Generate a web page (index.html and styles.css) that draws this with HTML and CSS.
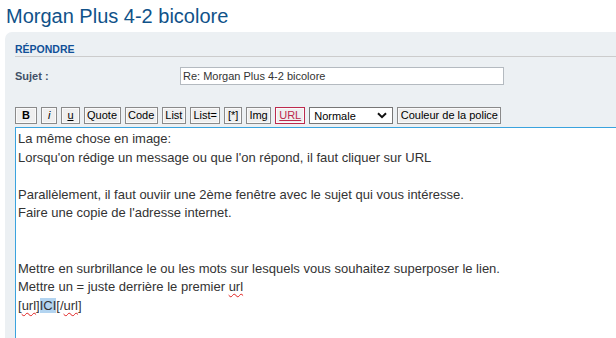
FILE: index.html
```html
<!DOCTYPE html>
<html lang="fr">
<head>
<meta charset="utf-8">
<title>Répondre</title>
<link rel="stylesheet" href="styles.css">
</head>
<body>
<h2 class="topic-title">Morgan Plus 4-2 bicolore</h2>
<div class="panel">
  <h3 class="panel-head">RÉPONDRE</h3>
  <div class="field-row">
    <label class="field-label">Sujet :</label>
    <div class="field-input">Re: Morgan Plus 4-2 bicolore</div>
  </div>
  <div class="toolbar">
    <span class="btn btn-b">B</span>
    <span class="btn btn-i">i</span>
    <span class="btn btn-u">u</span>
    <span class="btn">Quote</span>
    <span class="btn">Code</span>
    <span class="btn">List</span>
    <span class="btn">List=</span>
    <span class="btn">[*]</span>
    <span class="btn">Img</span>
    <span class="btn btn-url">URL</span>
    <span class="select">Normale<svg class="chev" width="10" height="7" viewBox="0 0 10 7"><path d="M1 1.2 L5 5.2 L9 1.2" fill="none" stroke="#111" stroke-width="2"/></svg></span>
    <span class="btn">Couleur de la police</span>
  </div>
  <div class="editor">
    <div class="line">La même chose en image:</div>
    <div class="line">Lorsqu'on rédige un message ou que l'on répond, il faut cliquer sur URL</div>
    <div class="line">&nbsp;</div>
    <div class="line">Parallèlement, il faut ouviir une 2ème fenêtre avec le sujet qui vous intéresse.</div>
    <div class="line">Faire une copie de l'adresse internet.</div>
    <div class="line">&nbsp;</div>
    <div class="line">&nbsp;</div>
    <div class="line">Mettre en surbrillance le ou les mots sur lesquels vous souhaitez superposer le lien.</div>
    <div class="line">Mettre un = juste derrière le premier <span class="spell">url</span></div>
    <div class="line">[<span class="spell">url</span>]<span class="sel">ICI</span>[/<span class="spell">url</span>]</div>
  </div>
</div>
</body>
</html>
```
FILE: styles.css
```css
html, body {
  margin: 0;
  padding: 0;
  background: #fff;
  overflow: hidden;
}
body {
  font-family: "Liberation Sans", Arial, sans-serif;
  width: 616px;
  height: 338px;
}
.topic-title {
  margin: 4px 0 4px 6px;
  font-size: 20px;
  line-height: 24px;
  font-weight: normal;
  color: #105289;
}
.panel {
  margin-left: 5px;
  width: 611px;
  height: 306px;
  overflow: hidden;
  background: #ECF0F3;
  border-radius: 7px 0 0 0;
  padding: 10px 0 0 10px;
  box-sizing: border-box;
}
.panel-head {
  margin: 0;
  font-size: 10.5px;
  line-height: 14px;
  font-weight: bold;
  color: #115098;
  border-bottom: 1px solid #CCCCCC;
}
.field-row {
  display: flex;
  align-items: center;
  margin-top: 10px;
  height: 18px;
}
.field-label {
  width: 165px;
  font-size: 11px;
  font-weight: bold;
  color: #425067;
}
.field-input {
  width: 324px;
  height: 18px;
  box-sizing: border-box;
  border: 1px solid #B4BAC0;
  background: #fff;
  font-size: 11px;
  line-height: 16px;
  padding-left: 2px;
  color: #333;
}
.toolbar {
  display: flex;
  align-items: center;
  gap: 4px;
  margin-top: 22px;
  height: 17px;
}
.btn {
  display: inline-block;
  height: 17px;
  box-sizing: border-box;
  border: 1px solid #8A8A8A;
  background: #EFEFEF;
  box-shadow: inset 0 0 0 1px #FAFAFA;
  font-size: 11px;
  line-height: 15px;
  padding: 0 2.5px;
  color: #000;
}
.btn-b {
  font-weight: bold;
  padding: 0 6px;
}
.btn-i {
  font-style: italic;
  padding: 0 6px;
}
.btn-u {
  text-decoration: underline;
  padding: 0 5px;
}
.btn-url {
  color: #BC2A4D;
  text-decoration: underline;
  border-color: #BC2A4D;
  padding: 0 3px;
}
.select {
  display: inline-flex;
  align-items: center;
  justify-content: space-between;
  width: 84px;
  height: 17px;
  box-sizing: border-box;
  border: 1px solid #767676;
  background: #fff;
  font-size: 11px;
  padding: 0 5px 0 4px;
  color: #000;
}
.editor {
  margin-top: 3px;
  border: 1px solid #3AA3DE;
  border-right: none;
  background: #fff;
  height: 220px;
  padding: 2px 0 0 2px;
  font-size: 13px;
  line-height: 18.5px;
  color: #333;
}
.spell {
  text-decoration: underline wavy #E02020;
  text-decoration-thickness: 1px;
  text-underline-offset: 2px;
}
.sel {
  background: #B3D4F0;
}
```
